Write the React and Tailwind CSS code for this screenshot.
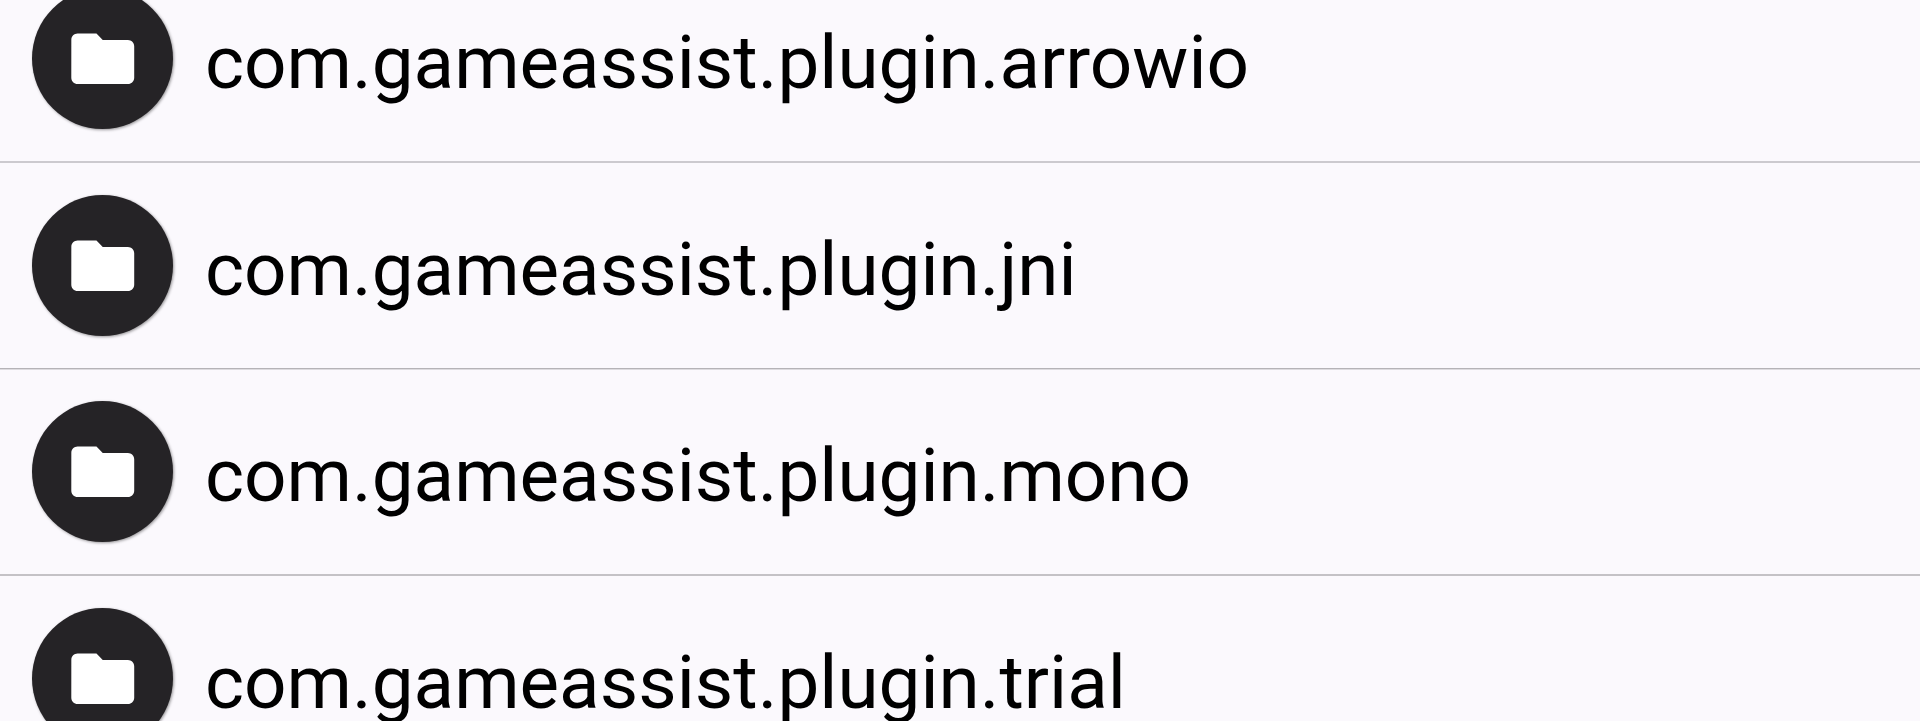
import { MdFolder } from 'react-icons/md';

const folders = [
  { name: 'com.gameassist.plugin.arrowio', row: 'h-[207px] border-b-2 border-[#cccacf]' },
  { name: 'com.gameassist.plugin.jni', row: 'h-[206px] border-b border-[#b5b3b7] shadow-[0_1px_0_#dddbdf]' },
  { name: 'com.gameassist.plugin.mono', row: 'h-[207px] border-b-2 border-[#c4c2c6]' },
  { name: 'com.gameassist.plugin.trial', row: 'h-[207px]' },
];

function FolderRow({ name, row }) {
  return (
    <li className={`flex shrink-0 items-start pt-8 pl-8 ${row}`}>
      <div className="flex size-[141px] shrink-0 items-center justify-center rounded-full bg-[#252326] shadow-[1px_1px_3px_rgba(0,0,0,0.4)]">
        <MdFolder className="size-[75.5px] text-white" />
      </div>
      <span className="ml-8 pt-[31px] text-[74.6px] leading-[88px] whitespace-nowrap text-black">{name}</span>
    </li>
  );
}

export default function App() {
  return (
    <main className="h-[721px] w-full overflow-hidden bg-[#fbf9fd] font-['Roboto',sans-serif]">
      {/* list is scrolled, so the first row starts above the top edge */}
      <ul className="-mt-[44px] flex flex-col">
        {folders.map((folder) => (
          <FolderRow key={folder.name} name={folder.name} row={folder.row} />
        ))}
      </ul>
    </main>
  );
}
